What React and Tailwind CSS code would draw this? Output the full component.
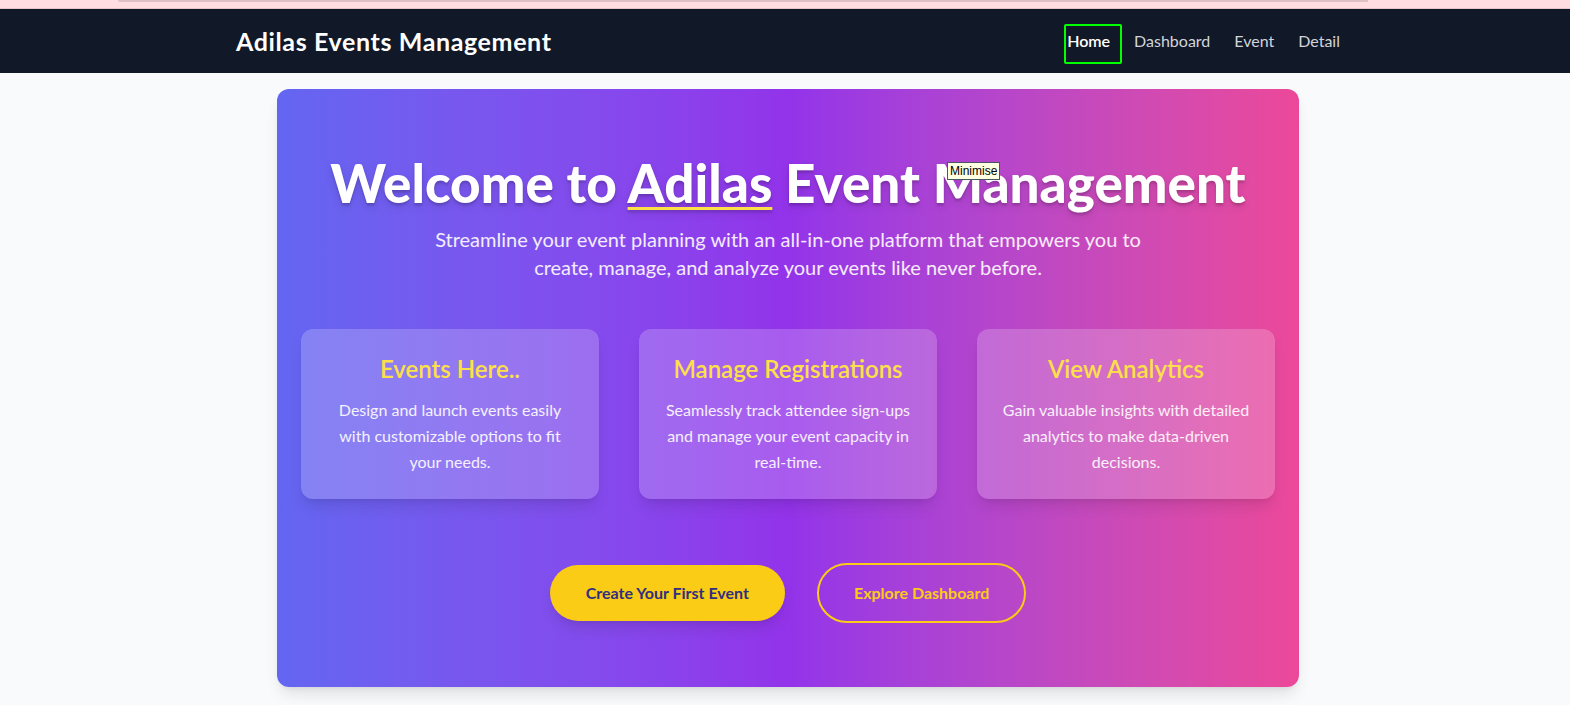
export default function App() {
  const features = [
    {
      title: 'Events Here..',
      text: 'Design and launch events easily with customizable options to fit your needs.',
    },
    {
      title: 'Manage Registrations',
      text: 'Seamlessly track attendee sign-ups and manage your event capacity in real-time.',
    },
    {
      title: 'View Analytics',
      text: 'Gain valuable insights with detailed analytics to make data-driven decisions.',
    },
  ];

  return (
    <div className="min-h-screen bg-[#f9fafb] font-['Lato',sans-serif]">
      {/* top strip */}
      <div className="h-[9px] bg-[#ffdde1] border-b border-[#e6c5ca]">
        <div className="ml-[118px] w-[1250px] h-[2px] bg-[#dcc0c5] rounded-bl-md" />
      </div>

      <nav className="bg-[#111827] pl-[6px]">
        <div className="max-w-6xl mx-auto px-6 py-4 flex items-center justify-between">
          <div className="text-[25px] tracking-wide font-bold text-white leading-8">Adilas Events Management</div>
          <div className="flex items-center gap-6 text-[#d1d5db]">
            <a className="relative text-white font-semibold">
              Home
              <span className="absolute -left-[3px] -top-[5px] w-[58px] h-[40px] border-2 border-[#00ff00] rounded-[2px]" />
            </a>
            <a>Dashboard</a>
            <a>Event</a>
            <a>Detail</a>
          </div>
        </div>
      </nav>

      <main className="pl-[22px] pr-4 pt-4 pb-6">
        <section className="relative max-w-[1022px] mx-auto rounded-xl shadow-lg bg-gradient-to-r from-[#6366f1] via-[#9333ea] to-[#ec4899] px-6 py-16 text-center">
          <h1 className="text-[53px] leading-[60px] font-black text-white text-shadow-lg mb-3">
            Welcome to{' '}
            <span className="underline decoration-[#fde047] decoration-[3px] underline-offset-[4px]">Adilas</span>{' '}
            Event Management
          </h1>
          <p className="text-xl text-white/90 max-w-3xl mx-auto mb-12 leading-7">
            Streamline your event planning with an all-in-one platform that empowers you to create, manage, and
            analyze your events like never before.
          </p>

          <div className="grid grid-cols-3 gap-10">
            {features.map((f) => (
              <div key={f.title} className="bg-white/20 rounded-xl shadow-lg p-6">
                <h3 className="text-2xl font-semibold text-[#fde047] mb-3">{f.title}</h3>
                <p className="text-white/90 leading-relaxed">{f.text}</p>
              </div>
            ))}
          </div>

          <div className="mt-16 flex items-center justify-center gap-8">
            <button className="bg-[#facc15] text-[#312e81] font-bold px-[36px] py-4 rounded-full shadow-lg">
              Create Your First Event
            </button>
            <button className="border-2 border-[#facc15] text-[#facc15] font-bold px-[35px] py-4 rounded-full">
              Explore Dashboard
            </button>
          </div>

          <div className="absolute left-[670px] top-[73px] bg-[#ffffe1] border border-gray-600 text-black text-xs leading-4 px-[2px] font-['Liberation_Sans',sans-serif]">
            Minimise
          </div>
        </section>
      </main>
    </div>
  );
}
